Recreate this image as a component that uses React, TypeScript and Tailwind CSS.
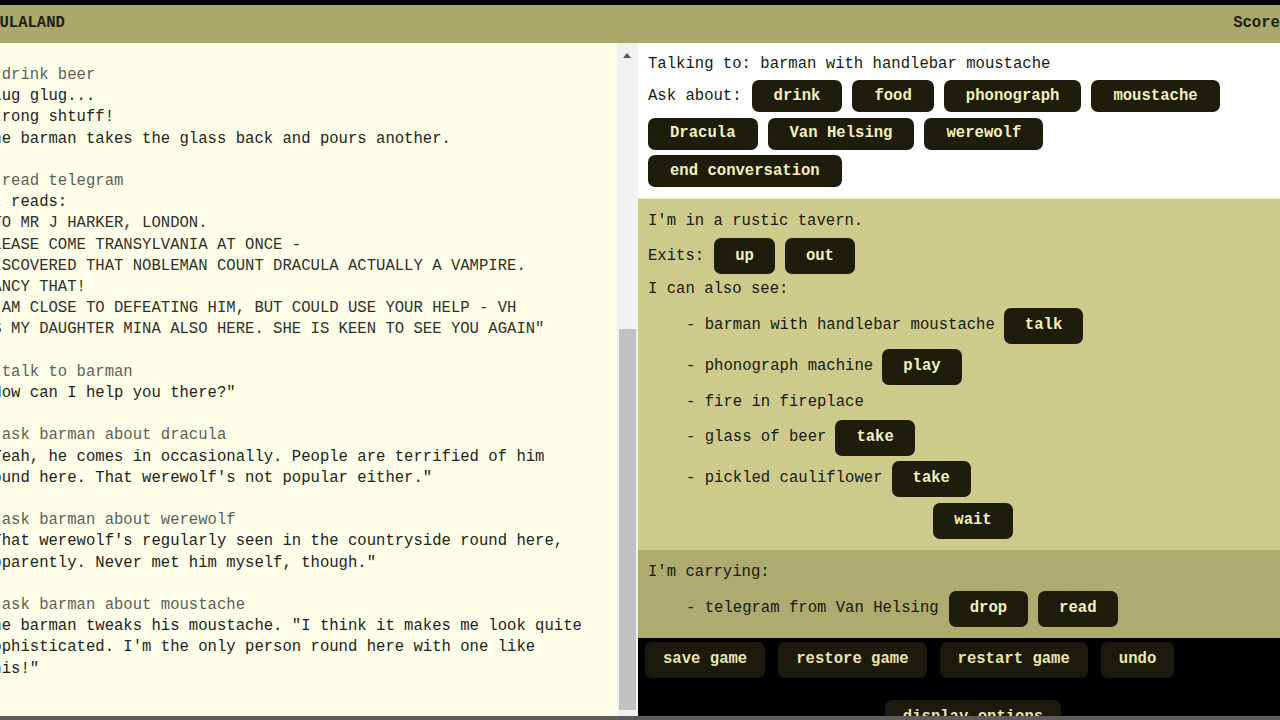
import React from "react";

const mono = { fontFamily: '"Liberation Mono", "DejaVu Sans Mono", monospace' };

type Line = { text: string; kind: "cmd" | "say" | "tele" };

const transcript: Line[][] = [
  [
    { text: "> drink beer", kind: "cmd" },
    { text: "Glug glug...", kind: "say" },
    { text: "Strong shtuff!", kind: "say" },
    { text: "The barman takes the glass back and pours another.", kind: "say" },
  ],
  [
    { text: "> read telegram", kind: "cmd" },
    { text: "It reads:", kind: "say" },
    { text: '"TO MR J HARKER, LONDON.', kind: "tele" },
    { text: "PLEASE COME TRANSYLVANIA AT ONCE -", kind: "tele" },
    { text: "DISCOVERED THAT NOBLEMAN COUNT DRACULA ACTUALLY A VAMPIRE.", kind: "tele" },
    { text: "FANCY THAT!", kind: "tele" },
    { text: "I AM CLOSE TO DEFEATING HIM, BUT COULD USE YOUR HELP - VH", kind: "tele" },
    { text: 'PS MY DAUGHTER MINA ALSO HERE. SHE IS KEEN TO SEE YOU AGAIN"', kind: "tele" },
  ],
  [
    { text: "> talk to barman", kind: "cmd" },
    { text: '"How can I help you there?"', kind: "say" },
  ],
  [
    { text: "> ask barman about dracula", kind: "cmd" },
    { text: '"Yeah, he comes in occasionally. People are terrified of him', kind: "say" },
    { text: "round here. That werewolf's not popular either.\"", kind: "say" },
  ],
  [
    { text: "> ask barman about werewolf", kind: "cmd" },
    { text: "\"That werewolf's regularly seen in the countryside round here,", kind: "say" },
    { text: 'apparently. Never met him myself, though."', kind: "say" },
  ],
  [
    { text: "> ask barman about moustache", kind: "cmd" },
    { text: 'The barman tweaks his moustache. "I think it makes me look quite', kind: "say" },
    { text: "sophisticated. I'm the only person round here with one like", kind: "say" },
    { text: 'this!"', kind: "say" },
  ],
];

function ConvBtn({ label }: { label: string }) {
  return (
    <button className="h-[32px] px-[22px] rounded-[7px] bg-[#1e1c0b] text-[#f3f1bd] font-bold flex items-center whitespace-nowrap">
      {label}
    </button>
  );
}

function ActBtn({ label }: { label: string }) {
  return (
    <button className="h-[36px] px-[21px] rounded-[7px] bg-[#1e1c0b] text-[#f3f1bd] font-bold flex items-center whitespace-nowrap">
      {label}
    </button>
  );
}

function MenuBtn({ label }: { label: string }) {
  return (
    <button className="h-[36px] px-[18px] rounded-[7px] bg-[#1b1a0d] text-[#e9e7a6] font-bold flex items-center whitespace-nowrap">
      {label}
    </button>
  );
}

function Item({ name, actions }: { name: string; actions: string[] }) {
  return (
    <div className="flex items-center gap-[9px] min-h-[25px]">
      <span className="whitespace-nowrap">- {name}</span>
      {actions.map((a) => (
        <ActBtn key={a} label={a} />
      ))}
    </div>
  );
}

export default function App() {
  return (
    <div
      className="w-[1280px] h-[720px] overflow-hidden bg-black flex flex-col text-[15.6px] leading-[21.2px]"
      style={mono}
    >
      <div className="h-[5px] shrink-0 bg-black" />
      <div className="ml-[-48px] w-[1356px] flex-1 min-h-0 flex flex-col">
        {/* title bar */}
        <div className="h-[38px] shrink-0 bg-[#aaa86a] flex items-center justify-between pl-[10px] text-[#1e1e14] font-bold">
          <span>DRACULALAND</span>
          <span>Score: 0</span>
        </div>

        <div className="flex-1 min-h-0 flex">
          {/* transcript */}
          <div className="w-[665px] shrink-0 bg-[#fefee9] pt-[22px] pl-[31px] overflow-hidden flex flex-col gap-[21.2px]">
            {transcript.map((group, gi) => (
              <div key={gi} className="flex flex-col">
                {group.map((l, li) => (
                  <div
                    key={li}
                    className={
                      "whitespace-nowrap " +
                      (l.kind === "cmd"
                        ? "text-[#5e5e58]"
                        : l.kind === "tele"
                        ? "text-[#30302a]"
                        : "text-[#22221c]")
                    }
                  >
                    {l.text}
                  </div>
                ))}
              </div>
            ))}
          </div>

          {/* scrollbar */}
          <div className="w-[21px] shrink-0 bg-[#f1f1f1] relative">
            <svg className="absolute left-[6px] top-[10px]" width="8" height="5" viewBox="0 0 8 5">
              <path d="M0 5 L4 0 L8 5 Z" fill="#555" />
            </svg>
            <div className="absolute left-[2px] w-[17px] top-[286px] h-[381px] bg-[#c1c1c1]" />
          </div>

          {/* side panel */}
          <div className="w-[670px] shrink-0 flex flex-col text-[#18180f]">
            {/* conversation */}
            <div className="bg-white pt-[11px] pb-[11px] px-[10px] border-b border-[#ebe9c4] flex flex-col gap-[5px]">
              <div>Talking to: barman with handlebar moustache</div>
              <div className="flex flex-wrap items-center gap-x-[10px] gap-y-[5.5px] pr-[60px]">
                <span>Ask about:</span>
                {["drink", "food", "phonograph", "moustache", "Dracula", "Van Helsing", "werewolf", "end conversation"].map(
                  (t) => (
                    <ConvBtn key={t} label={t} />
                  )
                )}
              </div>
            </div>

            {/* location */}
            <div className="bg-[#cccb8b] pt-[12px] pb-[11px] px-[10px] flex flex-col">
              <div>I'm in a rustic tavern.</div>
              <div className="flex items-center gap-[10px] mt-[6px]">
                <span>Exits:</span>
                <ActBtn label="up" />
                <ActBtn label="out" />
              </div>
              <div className="mt-[5px]">I can also see:</div>
              <div className="pl-[38px] mt-[7px] flex flex-col gap-[5px]">
                <Item name="barman with handlebar moustache" actions={["talk"]} />
                <Item name="phonograph machine" actions={["play"]} />
                <Item name="fire in fireplace" actions={[]} />
                <Item name="glass of beer" actions={["take"]} />
                <Item name="pickled cauliflower" actions={["take"]} />
              </div>
              <div className="flex justify-center mt-[6px]">
                <ActBtn label="wait" />
              </div>
            </div>

            {/* inventory */}
            <div className="bg-[#adab6f] pt-[12px] pb-[11px] px-[10px] flex flex-col">
              <div>I'm carrying:</div>
              <div className="pl-[38px] mt-[8px]">
                <div className="flex items-center gap-[10px]">
                  <span className="whitespace-nowrap">- telegram from Van Helsing</span>
                  <ActBtn label="drop" />
                  <ActBtn label="read" />
                </div>
              </div>
            </div>

            {/* game menu */}
            <div className="flex-1 bg-black pt-[4px] px-[7px] flex flex-col gap-[22px] overflow-hidden">
              <div className="flex flex-wrap gap-[13px]">
                <MenuBtn label="save game" />
                <MenuBtn label="restore game" />
                <MenuBtn label="restart game" />
                <MenuBtn label="undo" />
              </div>
              <div className="flex justify-center">
                <MenuBtn label="display options" />
              </div>
            </div>
          </div>
        </div>
      </div>
      <div className="h-[4px] shrink-0 bg-[#5c5c5c]" />
    </div>
  );
}
